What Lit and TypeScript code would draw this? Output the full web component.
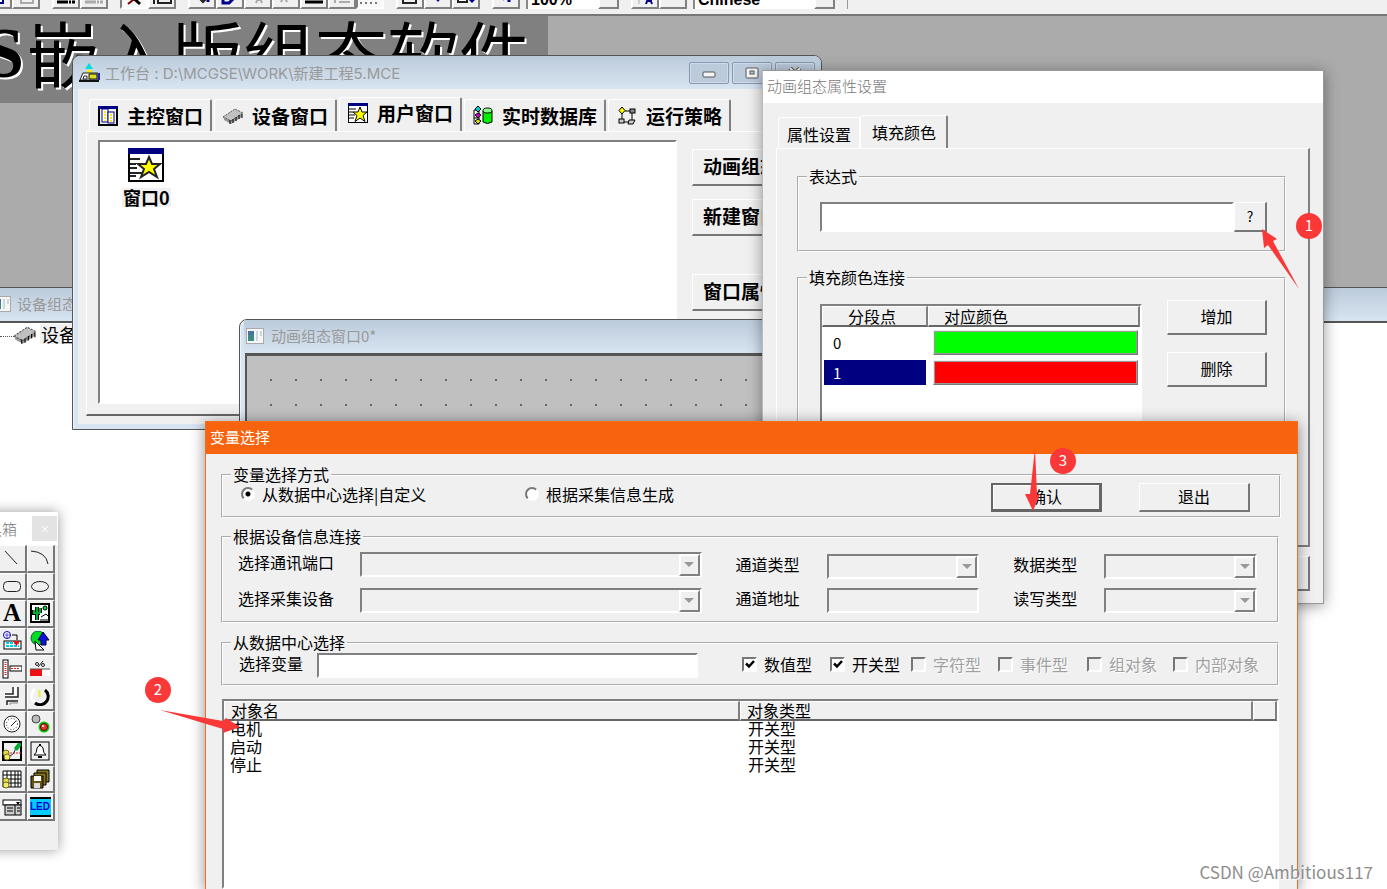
import { LitElement, html, css, svg } from "lit";
import { customElement } from "lit/decorators.js";
import { classMap } from "lit/directives/class-map.js";

const starIcon = svg`
  <rect x="0.5" y="0.5" width="19" height="19" fill="#fff" stroke="#000"/>
  <rect x="0" y="0" width="20" height="3" fill="#000080"/>
  <path d="M1 6h7M1 9h4M1 12h6M1 15h5" stroke="#000" fill="none"/>
  <path d="M12 4l2 5h5l-4 3.500 2 6-5-3.500-5 3.500 2-6-4-3.500h5z" fill="#ff0" stroke="#000"/>`;

const chipIcon = svg`
  <path d="M1 12L12 4l7 3v4L8 18l-7-4z" fill="#999"/>
  <path d="M0 11L12 3l8 4L8 15z" fill="#c0c0c0" stroke="#555" stroke-dasharray="2 1"/>
  <path d="M7 14v4M10 13v4M13 11v4M16 9v4M19 8v4" stroke="#000" fill="none"/>`;

const tabs = [
  {
    text: "主控窗口",
    active: false,
    icon: svg`<rect x="1" y="1" width="18" height="18" fill="#f0f0f0" stroke="#000" stroke-width="2"/>
      <rect x="0" y="0" width="20" height="3" fill="#000080"/>
      <rect x="4" y="3" width="6" height="13" fill="#fff" stroke="#000080"/>
      <rect x="10" y="6" width="6" height="11" fill="#fff" stroke="#000080"/>
      <path d="M7 5v10M13 8v8" stroke="#ffe600" stroke-width="2" stroke-dasharray="2 1"/>`,
  },
  { text: "设备窗口", active: false, icon: chipIcon },
  { text: "用户窗口", active: true, icon: starIcon },
  {
    text: "实时数据库",
    active: false,
    icon: svg`<path d="M1 4h5v14H1zM1 12h5" fill="none" stroke="#000"/>
      <path d="M5 0l3 3-3 3-3-3z" fill="#0cc" stroke="#000"/>
      <path d="M5 7l3 2-3 3-3-3z" fill="#c0c" stroke="#000"/>
      <path d="M5 13l3 2-3 3-3-3z" fill="#dd0" stroke="#000"/>
      <path d="M10 5v11q4.500 3 9 0V5z" fill="#0e0" stroke="#000"/>
      <ellipse cx="14.500" cy="4.500" rx="4.500" ry="2.500" fill="#8f8" stroke="#000"/>`,
  },
  {
    text: "运行策略",
    active: false,
    icon: svg`<path d="M5 8v7M8 5h6M15 7v9M7 16h6" stroke="#000" fill="none"/>
      <path d="M5 1l3 3.500-3 3.500-3-3.500z" fill="#ff0" stroke="#000"/>
      <rect x="13" y="3" width="5" height="4" fill="#888" stroke="#000"/>
      <rect x="2" y="13" width="5" height="4" fill="#ccc" stroke="#000"/>
      <path d="M12 14h6l-2 4h-5z" fill="#ccc" stroke="#000"/>`,
  },
];

const tools = [
  { name: "直线", icon: svg`<path d="M3 3l12 13" stroke="#222" fill="none"/>` },
  { name: "弧线", icon: svg`<path d="M1 3Q16 4 18 16" stroke="#222" fill="none"/>` },
  { name: "圆角矩形", icon: svg`<rect x="1.500" y="5.500" width="17" height="10" rx="4" stroke="#222" fill="none"/>` },
  { name: "椭圆", icon: svg`<ellipse cx="10" cy="10.500" rx="8.500" ry="5" stroke="#222" fill="none"/>` },
  { name: "标签", glyph: "A" },
  {
    name: "位图",
    icon: svg`<rect x="1" y="1" width="18" height="18" fill="#fff" stroke="#000" stroke-width="2"/>
      <path d="M7 4v13M4 7v3h6M10 5v5" stroke="#000" stroke-width="4" fill="none"/>
      <path d="M7 4v13M4 7v3h6M10 5v5" stroke="#0a3" stroke-width="2" fill="none"/>
      <circle cx="15" cy="5" r="2" fill="#0d3" stroke="#000"/>
      <path d="M11 14l5-3 2 2M10 17h8" stroke="#000" fill="none"/>`,
  },
  {
    name: "插入元件",
    icon: svg`<circle cx="5" cy="4" r="3.500" fill="#fff" stroke="#00a"/><path d="M3 4h5M5 2v5" stroke="#55c"/>
      <path d="M10 4h5v5" stroke="#000" fill="none"/>
      <rect x="2" y="10" width="17" height="8" fill="#fff" stroke="#000"/>
      <path d="M4 12h13M4 15h13" stroke="#0cd" stroke-width="2" stroke-dasharray="3 1"/>
      <path d="M11 10h7l-3.500 5z" fill="#e11"/>`,
  },
  {
    name: "常用符号",
    icon: svg`<circle cx="8" cy="7" r="7" fill="#0d2" stroke="#063"/>
      <path d="M13 1l6 8h-3v5h-5V9H8z" fill="#11d" stroke="#003"/><path d="M5 10l9 9H6z" fill="#fff" stroke="#000"/>`,
  },
  {
    name: "滑动输入",
    icon: svg`<rect x="1" y="1" width="5" height="18" fill="#fff" stroke="#000"/>
      <path d="M3.500 3v14" stroke="#d22" stroke-width="2" stroke-dasharray="1 1"/>
      <rect x="8" y="7" width="12" height="5" fill="#fff" stroke="#000"/><path d="M9 9.500h9" stroke="#d22" stroke-dasharray="2 1"/>`,
  },
  {
    name: "百分比填充",
    icon: svg`<rect x="0" y="10" width="20" height="7" fill="#fff"/><rect x="0" y="10" width="12" height="7" fill="#e11"/>
      <path d="M0 10h20" stroke="#555"/><circle cx="7" cy="5" r="1.500" fill="none" stroke="#222"/>
      <circle cx="13" cy="6" r="1.500" fill="none" stroke="#222"/><path d="M8 8l5-6" stroke="#222"/>`,
  },
  {
    name: "流动块",
    icon: svg`<path d="M3 9h9V1" stroke="#fff" stroke-width="5" fill="none"/><path d="M3 8h8V1M3 11h13V1" stroke="#222" stroke-width="1.500" fill="none"/>
      <path d="M5 19v-4h11" stroke="#222" stroke-width="1.500" fill="none"/><path d="M8 19v-2h8" stroke="#888" fill="none"/>`,
  },
  {
    name: "旋钮",
    icon: svg`<path d="M5 3a8.500 8.500 0 1 0 10 0" stroke="#fff" stroke-width="3" fill="none"/>
      <path d="M15 4a8 8 0 0 1-10 13" stroke="#000" stroke-width="3" fill="none"/><path d="M9.500 4v7" stroke="#ee3" stroke-width="2"/>`,
  },
  {
    name: "仪表",
    icon: svg`<circle cx="10" cy="10" r="8" fill="#fff" stroke="#222"/>
      <circle cx="10" cy="10" r="5.500" fill="none" stroke="#222" stroke-dasharray="1 2"/><path d="M9 12l5-5" stroke="#222"/>`,
  },
  {
    name: "指示灯",
    icon: svg`<circle cx="6" cy="5" r="4" fill="#bbb" stroke="#444"/><circle cx="14" cy="13" r="5.500" fill="#0c0"/>
      <circle cx="14" cy="13" r="3.500" fill="#e33" stroke="#600"/><circle cx="13" cy="12" r="1" fill="#fff"/>`,
  },
  {
    name: "实时曲线",
    icon: svg`<rect x="1" y="1" width="18" height="18" fill="none" stroke="#000" stroke-width="2"/>
      <path d="M2 12h17" stroke="#e22" stroke-dasharray="2 1"/><circle cx="4" cy="12" r="3" fill="#dd4" stroke="#762"/>
      <circle cx="5" cy="16" r="3" fill="#ee6" stroke="#762"/><path d="M8 15q4-1 6-8" stroke="#222" fill="none"/>
      <path d="M12 7l4-5h3v3l-4 5z" fill="#0a3"/>`,
  },
  {
    name: "报警",
    icon: svg`<rect x="1" y="1" width="18" height="18" fill="none" stroke="#000"/>
      <path d="M4 14q3-2 3-7 3-5 6 0 0 5 3 7z" fill="#fff" stroke="#000"/><path d="M10 3v2M8 16h4" stroke="#000" stroke-width="2"/>`,
  },
  {
    name: "表格",
    icon: svg`<rect x="1" y="2" width="18" height="16" fill="#fff"/>
      <path d="M1 2h18v16H1zM1 6h18M1 10h18M1 14h18M5 2v16M9 2v16M13 2v16M16 2v16" stroke="#000" fill="none"/>
      <circle cx="4" cy="12" r="3" fill="#dd4" stroke="#762"/><circle cx="4" cy="16" r="3" fill="#ee6" stroke="#762"/>`,
  },
  {
    name: "存盘",
    icon: svg`<path d="M7 1h12v12H7z" fill="#872" stroke="#000"/><path d="M4 4h12v12H4z" fill="#872" stroke="#000"/>
      <path d="M1 7h12v12H1z" fill="#651" stroke="#000"/><rect x="4" y="7" width="7" height="5" fill="#fff"/>
      <rect x="4" y="14" width="6" height="5" fill="#ddd"/>`,
  },
  {
    name: "组合框",
    icon: svg`<rect x="1" y="3" width="18" height="5" fill="#fff" stroke="#000"/><path d="M14 5h4l-2 3z" fill="#000"/>
      <rect x="3" y="8" width="16" height="10" fill="#ccc" stroke="#000"/><path d="M5 11h6M5 14h6M13 8v10M15 11h3M15 14h3" stroke="#000"/>`,
  },
  { name: "数码管", led: "LED" },
];

@customElement("app-root")
export class AppRoot extends LitElement {
  static styles = css`
    :host {
      display: block;
      position: relative;
      height: 100vh;
      overflow: hidden;
      background: #ababab;
      color: #000;
      font: 16px/18px "Noto Sans CJK SC", sans-serif;
    }
    * { box-sizing: border-box; }
    button, input, select { font: inherit; color: inherit; margin: 0; border-radius: 0; }
    svg { display: block; flex: none; }

    /* toolbar */
    .toolbar {
      display: flex;
      align-items: flex-end;
      gap: 12px;
      height: 16px;
      padding-bottom: 5px;
      overflow: hidden;
      background: #f0f0f0;
      border-bottom: 2px solid #777;
    }
    .group { display: flex; flex: none; }
    .first { margin-left: -16px; }
    .tb {
      display: flex;
      justify-content: center;
      align-items: flex-end;
      width: 28px;
      height: 26px;
      padding: 0 0 1px;
      background: #f0f0f0;
      border: 2px solid;
      border-color: #fff #808080 #808080 #fff;
    }
    .tb.on { background: #f8f8f8; border-color: #808080 #fff #fff #808080; }
    .tcombo { align-items: flex-end; height: 26px; margin-left: -6px; background: #fff; border-left: 2px solid #888; }
    .tcombo select {
      appearance: none;
      height: 26px;
      padding: 8px 4px 0 3px;
      border: 0;
      background: transparent;
      font: bold 16px/18px "Liberation Sans", sans-serif;
    }
    .zoom { width: 70px; }
    .lang { width: 119px; }
    .tcombo .tb { width: 21px; }
    .barend { align-self: stretch; width: 2px; border-left: 1px solid #999; }

    .banner {
      display: flex;
      width: 548px;
      height: 87px;
      overflow: hidden;
      background: #808080;
      font-size: 72px;
      line-height: 70px;
      white-space: nowrap;
      text-shadow: 2px 2px 0 #fff;
    }
    .banner b { font-family: "Liberation Serif", serif; margin-left: -16px; line-height: 74px; }
    .banner span { margin-left: 3px; }

    /* windows */
    .win { position: absolute; display: flex; flex-direction: column; }
    .aero {
      background: #d7e4f2;
      border: 1px solid #555;
      box-shadow: inset 1px 1px 0 #eef4fa;
    }
    .caption {
      display: flex;
      align-items: center;
      flex: none;
      padding-bottom: 2px;
      color: #999;
      font: 15px/20px "Noto Sans CJK SC", sans-serif;
      white-space: nowrap;
    }
    .aero .caption { height: 33px; background: linear-gradient(#bccbda, #d7e4f2); }

    .device { left: -16px; right: -8px; top: 287px; bottom: -8px; }
    .device .caption { padding-left: 8px; gap: 6px; border-bottom: 2px solid #555; height: 35px; }
    .tree { flex: 1; display: flex; align-items: flex-start; background: #fff; padding: 1px 0 0 15px; }
    .twig { width: 14px; margin-top: 12px; border-top: 1px dotted #555; }
    .node { background: #f0f0f0; margin-left: 4px; padding: 0 1px; font-size: 18px; line-height: 20px; }

    .bench { left: 72px; top: 55px; width: 750px; height: 375px; border-radius: 8px 8px 0 0; padding: 0 5px 5px; }
    .bench .caption { margin: 0 -5px; padding: 0 6px; gap: 5px; border-radius: 7px 7px 0 0; font-family: Inter, "Noto Sans CJK SC", sans-serif; }
    .title { flex: 1; padding-top: 3px; }
    .capbtns { display: flex; gap: 3px; }
    .capbtn {
      display: grid;
      place-items: center;
      width: 40px;
      height: 22px;
      padding: 0;
      background: #bccbdc;
      border: 1px solid #8999b5;
      border-radius: 2px;
      box-shadow: inset 0 0 0 1px #cfdbe8;
    }
    .benchbody { flex: 1; display: flex; flex-direction: column; background: #f0f0f0; padding: 8px 8px 8px; min-height: 0; }
    .tabs { display: flex; align-items: flex-end; flex: none; }
    .tab {
      display: flex;
      align-items: center;
      background: #f0f0f0;
      border: 1px solid #fff;
      border-right: 2px solid #808080;
      border-bottom: 0;
      border-radius: 3px 2px 0 0;
      white-space: nowrap;
    }
    .bench .tabs { height: 34px; gap: 2px; padding-left: 3px; }
    .bench .tab { gap: 9px; height: 32px; padding: 0 7px 0 8px; font-weight: bold; font-size: 19px; line-height: 24px; }
    .bench .tab.active { height: 34px; padding-bottom: 4px; }
    .benchpanel {
      flex: 1;
      display: flex;
      gap: 15px;
      padding: 8px 12px 10px 11px;
      border: 1px solid #fff;
      border-right: 2px solid #808080;
      border-bottom: 2px solid #666;
      min-height: 0;
    }
    .icons { width: 579px; background: #fff; border: 2px solid; border-color: #808080 #fff #fff #808080; padding: 6px 22px; }
    .iconitem { display: inline-flex; flex-direction: column; align-items: center; gap: 6px; font-weight: bold; font-size: 18px; line-height: 19px; }
    .iconitem span { background: #f0f0f0; padding: 0 1px; }
    .side { flex: 1; display: flex; flex-direction: column; gap: 13px; padding-top: 9px; }
    .btn {
      background: #f0f0f0;
      border: 1px solid #fff;
      border-right: 2px solid #777;
      border-bottom: 2px solid #777;
      padding: 0 0 2px;
      white-space: nowrap;
    }
    .side .btn { height: 37px; font-weight: bold; font-size: 19px; text-align: left; padding-left: 10px; }
    .side .btn.far { margin-top: 25px; }

    .anim { left: 239px; top: 319px; width: 540px; height: 130px; border-radius: 8px 0 0 0; padding-left: 5px; }
    .anim .caption { padding-left: 2px; gap: 7px; margin-left: -1px; }
    .canvas {
      flex: 1;
      background: #c0c0c0 radial-gradient(circle at 1px 1px, #666 1px, transparent 1px) 23px 23px / 25px 25px;
      border: 2px solid #555;
      border-width: 3px 0 0 2px;
    }

    /* property dialog */
    .prop { left: 762px; top: 70px; width: 562px; height: 534px; background: #f0f0f0; border: 1px solid #999; border-left-color: #bbb; box-shadow: 0 2px 14px rgba(0, 0, 0, 0.4); }
    .prop .caption { height: 32px; background: #fff; padding-left: 4px; font-weight: 300; color: #777; }
    .propbody { flex: 1; display: flex; flex-direction: column; padding: 12px 13px 12px 13px; }
    .prop .tabs { height: 33px; padding-left: 2px; }
    .prop .tab { height: 31px; padding: 2px 8px 0; border-right: 1px solid #fff; }
    .prop .tab.active { height: 33px; padding: 0 10px 1px 11px; border-right: 2px solid #808080; }
    .proppanel {
      flex: 1;
      display: flex;
      flex-direction: column;
      gap: 17px;
      padding: 19px 22px 14px 20px;
      border: 1px solid #fff;
      border-right: 2px solid #808080;
      border-bottom: 2px solid #808080;
    }
    fieldset { margin: 0; border: 2px groove #fff; padding: 0; min-width: 0; }
    legend { margin-left: 8px; padding: 0 2px; line-height: 16px; height: 18px; }
    .expr { display: flex; padding: 16px 17px 18px 21px; }
    .sunk { background: #fff; border: 2px solid; border-color: #808080 #fff #fff #808080; outline: none; }
    .expr input { flex: 1; min-width: 0; height: 30px; }
    .expr .btn { width: 33px; height: 30px; font-size: 14px; }
    .fill { flex: 1; }
    .fillrow { display: flex; gap: 25px; padding: 13px 17px 12px 21px; height: 240px; }
    .colors { flex: 1; margin-top: 4px; }
    table { border-collapse: separate; border-spacing: 0; table-layout: fixed; width: 100%; }
    th { font-weight: normal; background: #f0f0f0; border: 1px solid #fff; border-right: 2px solid #808080; border-bottom: 2px solid #666; padding: 0; }
    td { padding: 0; }
    .colors th { height: 21px; line-height: 18px; }
    .colors .c1 { width: 106px; padding-right: 5px; }
    .colors .left { text-align: left; padding-left: 15px; }
    .colors td { height: 30px; padding: 2px; }
    .num { display: block; font-size: 15px; line-height: 25px; padding-left: 9px; }
    .num.sel { background: #000080; color: #fff; }
    .swatch { display: block; width: 100%; height: 25px; border: 2px solid; border-color: #eee #777 #777 #eee; outline: 1px solid #999; outline-offset: -2px; padding: 0; }
    .colors td.sw { padding: 2px 2px 2px 5px; }
    .green { background: #0f0; }
    .red { background: #f00; }
    .stack { width: 100px; display: flex; flex-direction: column; gap: 17px; }
    .stack .btn, .foot .btn { height: 35px; }
    .foot { display: flex; justify-content: flex-end; gap: 14px; padding-top: 9px; }
    .foot .btn { width: 100px; }

    /* variable dialog */
    .vars { left: 205px; top: 421px; width: 1093px; bottom: -1px; background: #f0f0f0; border: 1px solid #f07020; box-shadow: 0 2px 14px rgba(0, 0, 0, 0.45); }
    .vars .caption { height: 32px; background: #f8630e; color: #fff; padding-left: 4px; }
    .varsbody { flex: 1; display: flex; flex-direction: column; padding: 12px 18px 0 15px; min-height: 0; }
    .mode { margin-right: -2px; height: 52px; }
    .moderow { display: flex; align-items: flex-start; padding: 0 29px 0 18px; margin-top: -1px; }
    .opt { display: flex; align-items: center; gap: 7px; height: 22px; white-space: nowrap; }
    .moderow .opt { width: 284px; }
    .moderow .grow { flex: 1; }
    .moderow .btn { width: 111px; height: 29px; }
    .moderow .btn.default { border: 2px solid #666; border-width: 2px 3px 3px 2px; box-shadow: inset 1px 1px 0 #fff; margin-right: 37px; }
    input[type="radio"] {
      appearance: none;
      width: 14px;
      height: 14px;
      border: 2px solid;
      border-color: #777 #fff #fff #777;
      border-radius: 50%;
      background: #fff;
    }
    input[type="radio"]:checked { background: radial-gradient(circle, #000 2px, #fff 3px); }
    .link { margin-top: 10px; height: 95px; }
    .linkgrid {
      display: grid;
      grid-template-columns: minmax(0, 464fr) minmax(0, 244fr) minmax(0, 244fr);
      gap: 34px;
      padding: 0 20px 0 15px;
    }
    .col { display: flex; flex-direction: column; gap: 9px; padding-top: 8px; }
    .col.wide { padding-top: 6px; gap: 11px; }
    .field { display: flex; height: 25px; }
    .field label { flex: none; width: 91px; line-height: 20px; }
    .wide label { width: 122px; }
    .combo { flex: 1; display: flex; background: #f0f0f0; border: 2px solid; border-color: #808080 #fff #fff #808080; min-width: 0; }
    .combo select { appearance: none; flex: 1; min-width: 0; border: 0; background: transparent; }
    .drop { display: grid; place-items: center; width: 21px; height: 22px; background: #f0f0f0; border: 2px solid; border-color: #fff #808080 #808080 #fff; }
    .field input { flex: 1; min-width: 0; background: #f0f0f0; }
    .center { margin-top: 11px; height: 52px; }
    .centerrow { display: flex; padding: 1px 15px 0 16px; }
    .centerrow .lab { width: 78px; line-height: 20px; }
    .centerrow .sunk { flex: 1; min-width: 0; height: 25px; }
    .checks { display: grid; grid-template-columns: 88px 81px 87px 89px 86px 89px; margin-left: 44px; line-height: 20px; }
    .checks .off { color: #a0a0a0; text-shadow: 1px 1px 0 #fff; }
    .box { position: relative; display: grid; }
    .box svg { position: absolute; left: 3px; top: 3px; pointer-events: none; }
    input[type="checkbox"] {
      appearance: none;
      width: 15px;
      height: 15px;
      background: #fff;
      border: 2px solid;
      border-color: #777 #fff #fff #777;
    }
    input[type="checkbox"]:disabled { background: #f0f0f0; }
    .data { flex: 1; margin: 13px 0 0 1px; overflow: hidden; }
    .data th { text-align: left; height: 20px; line-height: 16px; padding-left: 6px; vertical-align: top; }
    .data td { height: 18px; line-height: 15px; padding-left: 6px; vertical-align: top; }
    .data td + td { padding-left: 8px; }
    .n1 { width: 516px; }
    .n3 { width: 24px; }

    /* tool palette */
    .tools { left: -32px; top: 512px; width: 90px; height: 338px; background: #f0f0f0; box-shadow: 0 0 12px rgba(0, 0, 0, 0.4); }
    .tools .caption { height: 33px; background: #fff; padding: 0 1px 0 4px; justify-content: space-between; font-weight: 300; color: #777; }
    .close { width: 25px; height: 25px; border: 0; padding: 0; background: #e3e3e3; color: #fff; display: grid; place-items: center; }
    .toolgrid { display: grid; grid-template-columns: 28px 28px; grid-auto-rows: 1fr; height: 276px; justify-content: end; margin-right: 3px; }
    .tool {
      display: grid;
      place-items: center;
      min-height: 0;
      padding: 0 1px 0 0;
      background: #f0f0f0;
      border: 1px solid;
      border-color: #fff #777 #777 #fff;
      border-width: 1px 2px 2px 1px;
    }
    .serif { font: bold 25px/22px "Liberation Serif", serif; }
    .led {
      width: 21px;
      background: #0cf;
      border-top: 2px solid #000;
      border-bottom: 2px solid #000;
      font: bold 10px/16px "Liberation Sans", sans-serif;
      color: #00c;
      text-align: center;
    }

    /* annotations */
    .marks { position: absolute; left: 0; top: 0; pointer-events: none; }
    .badge {
      position: absolute;
      width: 26px;
      height: 26px;
      border-radius: 50%;
      background: #fb3838;
      color: #fff;
      font-size: 15px;
      line-height: 24px;
      text-align: center;
    }
    .b1 { left: 1296px; top: 213px; }
    .b2 { left: 145px; top: 677px; }
    .b3 { left: 1050px; top: 448px; }
    .credit {
      position: absolute;
      right: 14px;
      bottom: 5px;
      font: 17px/24px "Noto Sans CJK SC", sans-serif;
      color: #8d8d8d;
      text-shadow: 1px 1px 0 #fff;
    }
  `;

  private icon20(content: unknown, size = 20) {
    return html`<svg width=${size} height=${size} viewBox="0 0 20 20" aria-hidden="true">${content}</svg>`;
  }

  private appIcon() {
    return html`<svg width="18" height="16" viewBox="0 0 18 16" aria-hidden="true">
      <rect x="0.5" y="0.5" width="17" height="15" fill="#f6f6f6" stroke="#aaa" />
      <rect x="2" y="3" width="6" height="10" fill="#3c8a86" />
      <rect x="2" y="3" width="6" height="4" fill="#47759c" />
      <path d="M10 3h2v10h-2zM14 3h2v5h-2z" fill="#cfd8d8" />
    </svg>`;
  }

  private combo(id: string, label: string) {
    return html`<div class="field">
      <label for=${id}>${label}</label>
      <span class="combo"
        ><select id=${id} disabled></select
        ><span class="drop"><svg width="10" height="6" viewBox="0 0 10 6"><path d="M0 0h10L5 5z" fill="#999" /></svg></span
      ></span>
    </div>`;
  }

  private check(label: string, on: boolean) {
    return html`<label class=${classMap({ opt: true, off: !on })}
      ><span class="box"
        ><input type="checkbox" .checked=${on} ?disabled=${!on} />${on
          ? html`<svg width="10" height="9" viewBox="0 0 10 9"><path d="M1 3.500l3 3 5-5.500" fill="none" stroke="#000" stroke-width="2.500" /></svg>`
          : null}</span
      >${label}</label
    >`;
  }

  private tb(content: unknown = null, on = false) {
    return html`<button class=${classMap({ tb: true, on })} aria-label="工具">
      <svg width="20" height="10" viewBox="0 0 20 10" aria-hidden="true">${content}</svg>
    </button>`;
  }

  private toolbar() {
    const pages = svg`<path d="M2 0v7h13V0" fill="#fff" stroke="#00008b" stroke-width="2"/><path d="M5 3h7" stroke="#333"/>`;
    const grey = svg`<path d="M5 0v7h12V0M8 3h6" fill="none" stroke="#aaa" stroke-width="2"/>`;
    return html`<div class="toolbar">
      <div class="group first">${this.tb(pages)}${this.tb(grey)}</div>
      <div class="group">
        ${this.tb(svg`<path d="M1 6h18" stroke="#000" stroke-width="3" stroke-dasharray="11 1 2 1"/>`)}
        ${this.tb(svg`<path d="M1 6h18" stroke="#aaa" stroke-width="3" stroke-dasharray="11 1 2 1"/>`)}
      </div>
      <div class="group">
        ${this.tb(svg`<path d="M4 8L14 0" stroke="#800000" stroke-width="2"/><path d="M7 0l9 8" stroke="#000" stroke-width="3"/>`, true)}
        ${this.tb(svg`<path d="M2 0v8M6 0h13v7H6z" fill="none" stroke="#222" stroke-width="2"/><path d="M2 1v3" stroke="#dd0" stroke-width="3"/>`)}
      </div>
      <div class="group">
        ${this.tb(svg`<path d="M5 0l6 6 6-6" fill="#fff" stroke="#222" stroke-width="2"/><path d="M16 0v6" stroke="#00008b" stroke-width="3"/>`)}
        ${this.tb(svg`<path d="M3 0v7h6l7-7" fill="none" stroke="#00008b" stroke-width="3"/>`)}
        ${this.tb(svg`<path d="M8 7l3-7 3 7M9 4h5" fill="none" stroke="#aaa" stroke-width="2"/>`)}
        ${this.tb(svg`<path d="M5 6l3-6 3 6M6 3h5" fill="none" stroke="#aaa" stroke-width="2"/>`)}
        ${this.tb(svg`<path d="M1 6h18" stroke="#000" stroke-width="3"/>`)}
        ${this.tb(svg`<path d="M3 0v7M7 2h11M7 6h11" stroke="#aaa" stroke-width="2" fill="none"/>`)}
        ${this.tb(svg`<path d="M0 7h20" stroke="#777" stroke-width="2" stroke-dasharray="2 3"/>`, true)}
      </div>
      <div class="group">
        ${this.tb(svg`<path d="M3 0v7h13V0M6 3h7" stroke="#222" stroke-width="2" fill="none"/>`)}
        ${this.tb(svg`<path d="M5 0l5 6 5-6z" fill="#00008b"/>`)}
        ${this.tb(svg`<path d="M2 0v6h9V0" stroke="#222" fill="#fff" stroke-width="2"/><path d="M12 3l4 4 4-4-4-3z" fill="#00008b"/>`)}
      </div>
      <div class="group">${this.tb(svg`<path d="M5 0l3 4" stroke="#222" stroke-width="2"/><path d="M12 0v2M13 4v2" stroke="#00008b" stroke-width="3"/>`)}</div>
      <div class="group tcombo">
        <select class="zoom" aria-label="缩放"><option>100%</option></select>
        <span class="tb"></span>
      </div>
      <div class="group">${this.tb(svg`<path d="M4 0v8" stroke="#aaa"/><path d="M11 8l3-8 3 8M12 5h5" stroke="#00008b" stroke-width="2" fill="none"/>`)}${this.tb()}</div>
      <div class="group tcombo">
        <select class="lang" aria-label="语言"><option>Chinese</option></select>
        <span class="tb"></span>
      </div>
      <span class="barend"></span>
    </div>`;
  }

  private bench() {
    return html`<section class="win aero bench">
      <header class="caption">
        <svg width="21" height="20" viewBox="0 0 21 20" aria-hidden="true">
          <path d="M10 0l4 6H6z" fill="#0dd" /><path d="M8 7h5v3H8z" fill="#ee0" />
          <path d="M4 10h15v7H1z" fill="#fff" stroke="#222" /><path d="M10 11h8v5h-8z" fill="#dd2" stroke="#111" />
          <path d="M5 13h3v3H4z" fill="#fff" stroke="#222" /><path d="M0 18h20" stroke="#111" stroke-width="2" /><path d="M20 10v7" stroke="#22b" stroke-width="2" />
        </svg>
        <span class="title">工作台 : D:\\MCGSE\\WORK\\新建工程5.MCE</span>
        <span class="capbtns">
          <button class="capbtn" aria-label="最小化"><svg width="14" height="12" viewBox="0 0 14 12"><rect x="1" y="5" width="12" height="5" rx="1" fill="#f6f6f6" stroke="#555" /></svg></button>
          <button class="capbtn" aria-label="最大化"><svg width="14" height="12" viewBox="0 0 14 12"><rect x="1" y="1" width="12" height="10" rx="1" fill="#f6f6f6" stroke="#555" /><rect x="5" y="4" width="4" height="3" fill="#bccbdc" stroke="#555" /></svg></button>
          <button class="capbtn" aria-label="关闭"><svg width="14" height="12" viewBox="0 0 14 12"><path d="M2 1l10 10M12 1L2 11" stroke="#555" stroke-width="4" /><path d="M2 1l10 10M12 1L2 11" stroke="#f6f6f6" stroke-width="2" /></svg></button>
        </span>
      </header>
      <div class="benchbody">
        <div class="tabs">
          ${tabs.map((t) => html`<div class=${classMap({ tab: true, active: t.active })}>${this.icon20(t.icon)}${t.text}</div>`)}
        </div>
        <div class="benchpanel">
          <div class="icons">
            <div class="iconitem">
              <svg width="36" height="34" viewBox="0 0 36 34" aria-hidden="true">
                <rect x="1" y="1" width="34" height="32" fill="#fff" stroke="#000" stroke-width="2" />
                <rect x="0" y="0" width="36" height="6" fill="#000080" />
                <path d="M2 11h10M2 16h6M2 20h7M2 25h12M2 28h6" stroke="#222" stroke-width="2" />
                <path d="M21 9l3 7h8l-6 5 3 8-8-5-8 5 3-8-6-5h8z" fill="#ff0" stroke="#222" stroke-width="2" />
              </svg>
              <span>窗口0</span>
            </div>
          </div>
          <div class="side">
            <button class="btn">动画组态</button>
            <button class="btn">新建窗口</button>
            <button class="btn far">窗口属性</button>
          </div>
        </div>
      </div>
    </section>`;
  }

  private propDialog() {
    return html`<section class="win prop">
      <header class="caption">动画组态属性设置</header>
      <div class="propbody">
        <div class="tabs">
          <div class="tab">属性设置</div>
          <div class="tab active">填充颜色</div>
        </div>
        <div class="proppanel">
          <fieldset>
            <legend>表达式</legend>
            <div class="expr">
              <input class="sunk" type="text" aria-label="表达式" /><button class="btn">?</button>
            </div>
          </fieldset>
          <fieldset class="fill">
            <legend>填充颜色连接</legend>
            <div class="fillrow">
              <div class="colors sunk">
                <table>
                  <thead>
                    <tr><th class="c1">分段点</th><th class="left">对应颜色</th></tr>
                  </thead>
                  <tbody>
                    <tr><td><span class="num">0</span></td><td class="sw"><button class="swatch green" aria-label="绿色"></button></td></tr>
                    <tr><td><span class="num sel">1</span></td><td class="sw"><button class="swatch red" aria-label="红色"></button></td></tr>
                  </tbody>
                </table>
              </div>
              <div class="stack"><button class="btn">增加</button><button class="btn">删除</button></div>
            </div>
          </fieldset>
        </div>
        <div class="foot"><button class="btn" aria-label="帮助"></button></div>
      </div>
    </section>`;
  }

  private varDialog() {
    return html`<section class="win vars">
      <header class="caption">变量选择</header>
      <div class="varsbody">
        <fieldset class="mode">
          <legend>变量选择方式</legend>
          <div class="moderow">
            <label class="opt"><input type="radio" name="mode" checked />从数据中心选择|自定义</label>
            <label class="opt"><input type="radio" name="mode" />根据采集信息生成</label>
            <span class="grow"></span>
            <button class="btn default">确认</button>
            <button class="btn">退出</button>
          </div>
        </fieldset>
        <fieldset class="link">
          <legend>根据设备信息连接</legend>
          <div class="linkgrid">
            <div class="col wide">${this.combo("port", "选择通讯端口")}${this.combo("dev", "选择采集设备")}</div>
            <div class="col">
              ${this.combo("ctype", "通道类型")}
              <div class="field"><label for="addr">通道地址</label><input id="addr" class="sunk" type="text" disabled /></div>
            </div>
            <div class="col">${this.combo("dtype", "数据类型")}${this.combo("rw", "读写类型")}</div>
          </div>
        </fieldset>
        <fieldset class="center">
          <legend>从数据中心选择</legend>
          <div class="centerrow">
            <label class="lab" for="var">选择变量</label>
            <input id="var" class="sunk" type="text" />
            <div class="checks">
              ${this.check("数值型", true)}${this.check("开关型", true)}${this.check("字符型", false)}
              ${this.check("事件型", false)}${this.check("组对象", false)}${this.check("内部对象", false)}
            </div>
          </div>
        </fieldset>
        <div class="data sunk">
          <table>
            <thead>
              <tr><th class="n1">对象名</th><th>对象类型</th><th class="n3"></th></tr>
            </thead>
            <tbody>
              ${["电机", "启动", "停止"].map((n) => html`<tr><td>${n}</td><td>开关型</td><td></td></tr>`)}
            </tbody>
          </table>
        </div>
      </div>
    </section>`;
  }

  render() {
    return html`
      ${this.toolbar()}
      <div class="banner"><b>S</b><span>嵌入版组态软件</span></div>

      <section class="win aero device">
        <header class="caption">${this.appIcon()}<span>设备组态</span></header>
        <div class="tree"><span class="twig"></span>${this.icon20(chipIcon, 22)}<span class="node">设备窗口</span></div>
      </section>

      ${this.bench()}

      <section class="win aero anim">
        <header class="caption">${this.appIcon()}<span>动画组态窗口0*</span></header>
        <div class="canvas"></div>
      </section>

      ${this.propDialog()}

      <section class="win tools">
        <header class="caption">
          <span>工具箱</span>
          <button class="close" aria-label="关闭"><svg width="8" height="8" viewBox="0 0 8 8"><path d="M1 1l6 6M7 1L1 7" stroke="#fff" /></svg></button>
        </header>
        <div class="toolgrid">
          ${tools.map(
            (t) => html`<button class="tool" aria-label=${t.name}>
              ${t.glyph ? html`<span class="serif">${t.glyph}</span>` : t.led ? html`<span class="led">${t.led}</span>` : this.icon20(t.icon)}
            </button>`
          )}
        </div>
      </section>

      ${this.varDialog()}

      <svg class="marks" width="1387" height="889" viewBox="0 0 1387 889" fill="#fb3838" aria-hidden="true">
        <path d="M1262 229L1277 239L1273 241L1299 289L1268 245L1264 248Z" />
        <path d="M160 710L223 721L226 718L240 727L223 733L223 729Z" />
        <path d="M1035 448L1037 495L1040 494L1033 511L1025 494L1030 494Z" />
      </svg>
      <span class="badge b1">1</span>
      <span class="badge b2">2</span>
      <span class="badge b3">3</span>
      <span class="credit">CSDN @Ambitious117</span>
    `;
  }
}
